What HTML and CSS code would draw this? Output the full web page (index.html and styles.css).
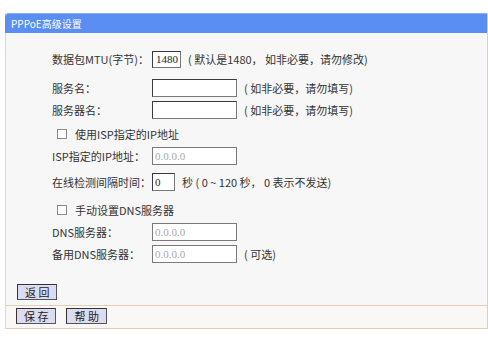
FILE: index.html
```html
<!DOCTYPE html>
<html lang="zh-CN">
  <head>
    <title>PPPoE高级设置</title>
    <meta charset="utf-8">
    <link rel="stylesheet" href="styles.css">
  </head>
  <body>
    <div class="panel">
      <div class="title">PPPoE高级设置</div>
      <div class="content">
        <div class="row">
          <label class="name" for="mtu">数据包MTU(字节)：</label>
          <input class="box tiny" id="mtu" type="text" value="1480">
          <span class="note">( 默认是1480， 如非必要，请勿修改)</span>
        </div>
        <div class="row gap7">
          <label class="name" for="svc">服务名：</label>
          <input class="box" id="svc" type="text">
          <span class="note">( 如非必要，请勿填写)</span>
        </div>
        <div class="row">
          <label class="name" for="acname">服务器名：</label>
          <input class="box" id="acname" type="text">
          <span class="note">( 如非必要，请勿填写)</span>
        </div>
        <div class="row check gap2">
          <input type="checkbox" id="useisp">
          <label for="useisp">使用ISP指定的IP地址</label>
        </div>
        <div class="row">
          <label class="name" for="ispip">ISP指定的IP地址：</label>
          <input class="box" id="ispip" type="text" value="0.0.0.0" disabled>
        </div>
        <div class="row gap4">
          <label class="name" for="echo">在线检测间隔时间：</label>
          <input class="box small" id="echo" type="text" value="0">
          <span class="note">秒 ( 0 ~ 120 秒， 0 表示不发送)</span>
        </div>
        <div class="row check gap6">
          <input type="checkbox" id="manualdns">
          <label for="manualdns">手动设置DNS服务器</label>
        </div>
        <div class="row">
          <label class="name" for="dns1">DNS服务器：</label>
          <input class="box" id="dns1" type="text" value="0.0.0.0" disabled>
        </div>
        <div class="row tight">
          <label class="name" for="dns2">备用DNS服务器：</label>
          <input class="box" id="dns2" type="text" value="0.0.0.0" disabled>
          <span class="note">( 可选)</span>
        </div>
        <div class="back">
          <button class="btn" type="button">返 回</button>
        </div>
      </div>
      <div class="footer">
        <button class="btn" type="button">保 存</button>
        <button class="btn" type="button">帮 助</button>
      </div>
    </div>
  </body>
</html>
```

FILE: styles.css
```css
html, body {
  margin: 0;
  background: #ffffff;
}
body {
  font-family: "Noto Sans CJK SC", "DejaVu Sans", sans-serif;
  font-size: 11px;
  color: #333333;
}
.panel {
  margin: 13px 1px 0 5px;
  width: 481px;
  border-left: 1px solid #e6d6c2;
  border-right: 1px solid #d4d0cc;
  border-bottom: 1px solid #e3cfb8;
  background: #f7f7f7;
}
.title {
  height: 20px;
  line-height: 20px;
  padding-left: 6px;
  background: #5b8ef3;
  border-top: 1px solid #8db0f5;
  border-top-left-radius: 4px;
  margin-left: -1px;
  color: #ffffff;
  font-size: 10px;
  box-sizing: border-box;
}
.content {
  display: flex;
  flex-direction: column;
  padding: 15px 0 0 46px;
  height: 272px;
  box-sizing: border-box;
}
.row {
  display: flex;
  align-items: center;
  height: 22px;
}
.gap2 { margin-top: 2px; }
.gap4 { margin-top: 4px; }
.gap6 { margin-top: 6px; }
.gap7 { margin-top: 7px; }
.tight { height: 21px; }
.name {
  width: 100px;
  flex: none;
}
.box {
  width: 85px;
  height: 18px;
  box-sizing: border-box;
  border: 1px solid #3a3a3a;
  border-right-color: #777777;
  border-bottom-color: #777777;
  background: #ffffff;
  font-family: "Liberation Serif", "DejaVu Serif", serif;
  font-size: 11px;
  color: #222222;
  padding: 0 2px;
  margin: 0;
}
.box:disabled {
  border-color: #7a7a7a;
  color: #a8a8a8;
  background: #ffffff;
}
.tiny { width: 29px; height: 17px; padding: 0 1px 0 3px; }
.small { width: 23px; }
.note {
  margin-left: 7px;
  white-space: pre;
}
.check {
  padding-left: 5px;
}
.check input {
  appearance: none;
  -webkit-appearance: none;
  width: 10px;
  height: 10px;
  margin: 0 8px 0 0;
  border: 1px solid #8a8a8a;
  background: #ffffff;
}
.back {
  margin: 20px 0 0 -35px;
}
.btn {
  font-family: "Noto Sans CJK SC", sans-serif;
  font-size: 11px;
  color: #222222;
  height: 16px;
  line-height: 12px;
  padding: 0 7px;
  background: #dcdcf0;
  border: 1px solid #333333;
  border-right-color: #555555;
  border-bottom-color: #555555;
}
.footer {
  display: flex;
  gap: 10px;
  height: 23px;
  padding: 2px 0 0 10px;
  box-sizing: border-box;
  border-top: 1px solid #e3cfb8;
  background: #f9f8f6;
}
```
